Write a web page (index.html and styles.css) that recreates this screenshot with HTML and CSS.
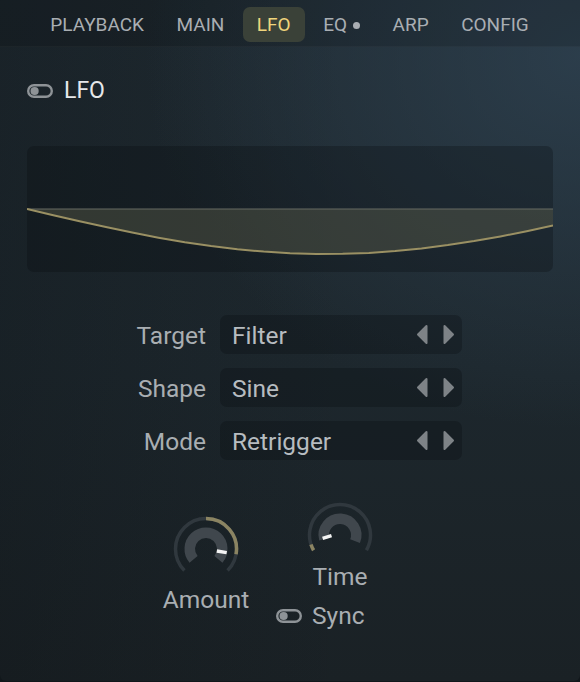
FILE: index.html
```html
<!DOCTYPE html>
<html>
<head>
<meta charset="utf-8">
<link rel="stylesheet" href="styles.css">
</head>
<body>
<div class="panel">
  <nav class="tabs">
    <div class="tab">PLAYBACK</div>
    <div class="tab">MAIN</div>
    <div class="tab active">LFO</div>
    <div class="tab">EQ<span class="dot"></span></div>
    <div class="tab">ARP</div>
    <div class="tab">CONFIG</div>
  </nav>

  <div class="content">
    <div class="header">
      <svg class="toggle" width="26" height="14" viewBox="0 0 26 14"><rect x="1.2" y="1.2" width="23.6" height="11.6" rx="5.8" fill="none" stroke="#8e9397" stroke-width="2.4"/><circle cx="7.6" cy="7" r="4.1" fill="#8e9397"/></svg>
      <span class="title">LFO</span>
    </div>

    <div class="wave">
      <svg width="526" height="126" viewBox="0 0 526 126">
        <path d="M0 63 L26.3 69.2 L52.6 75.3 L78.9 81.1 L105.2 86.6 L131.5 91.7 L157.8 96.2 L184.1 100.1 L210.4 103.2 L236.7 105.6 L263 107.2 L289.3 107.9 L315.6 107.8 L341.9 106.9 L368.2 105.1 L394.5 102.5 L420.8 99.1 L447.1 95.1 L473.4 90.4 L499.7 85.2 L526 79.6 L526 63 Z" fill="rgba(112,112,86,0.34)"/>
        <line x1="0" y1="63" x2="526" y2="63" stroke="#666b63" stroke-width="1.2"/>
        <polyline points="0,63 26.3,69.2 52.6,75.3 78.9,81.1 105.2,86.6 131.5,91.7 157.8,96.2 184.1,100.1 210.4,103.2 236.7,105.6 263,107.2 289.3,107.9 315.6,107.8 341.9,106.9 368.2,105.1 394.5,102.5 420.8,99.1 447.1,95.1 473.4,90.4 499.7,85.2 526,79.6" fill="none" stroke="#9a9063" stroke-width="2" stroke-linejoin="round"/>
      </svg>
    </div>

    <div class="form">
      <div class="row">
        <div class="label">Target</div>
        <div class="select"><span class="value">Filter</span>
          <span class="arrows">
            <svg width="12" height="21" viewBox="0 0 12 21"><path d="M10.5 2 L2 10.5 L10.5 19 Z" fill="#7e8387" stroke="#7e8387" stroke-width="2" stroke-linejoin="round"/></svg>
            <svg width="12" height="21" viewBox="0 0 12 21"><path d="M1.5 2 L10 10.5 L1.5 19 Z" fill="#7e8387" stroke="#7e8387" stroke-width="2" stroke-linejoin="round"/></svg>
          </span>
        </div>
      </div>
      <div class="row">
        <div class="label">Shape</div>
        <div class="select"><span class="value">Sine</span>
          <span class="arrows">
            <svg width="12" height="21" viewBox="0 0 12 21"><path d="M10.5 2 L2 10.5 L10.5 19 Z" fill="#7e8387" stroke="#7e8387" stroke-width="2" stroke-linejoin="round"/></svg>
            <svg width="12" height="21" viewBox="0 0 12 21"><path d="M1.5 2 L10 10.5 L1.5 19 Z" fill="#7e8387" stroke="#7e8387" stroke-width="2" stroke-linejoin="round"/></svg>
          </span>
        </div>
      </div>
      <div class="row">
        <div class="label">Mode</div>
        <div class="select"><span class="value">Retrigger</span>
          <span class="arrows">
            <svg width="12" height="21" viewBox="0 0 12 21"><path d="M10.5 2 L2 10.5 L10.5 19 Z" fill="#7e8387" stroke="#7e8387" stroke-width="2" stroke-linejoin="round"/></svg>
            <svg width="12" height="21" viewBox="0 0 12 21"><path d="M1.5 2 L10 10.5 L1.5 19 Z" fill="#7e8387" stroke="#7e8387" stroke-width="2" stroke-linejoin="round"/></svg>
          </span>
        </div>
      </div>
    </div>

    <div class="knobs">
      <div class="knob-group amount">
        <svg class="knob" width="66" height="60" viewBox="0 0 66 60">
          <path d="M11.43 54.57 A30.5 30.5 0 1 1 54.57 54.57" fill="none" stroke="#30383e" stroke-width="3.5"/>
          <path d="M33 2.5 A30.5 30.5 0 0 1 63.04 38.3" fill="none" stroke="#8b8462" stroke-width="3.5"/>
          <path d="M20.55 43.45 A16.25 16.25 0 1 1 45.45 43.45" fill="none" stroke="#40474d" stroke-width="10.5"/>
          <line x1="43.83" y1="34.91" x2="53.68" y2="36.65" stroke="#f4f4f4" stroke-width="3.5"/>
        </svg>
        <div class="knob-label amount-label">Amount</div>
      </div>
      <div class="knob-group time">
        <div class="time-knob">
          <svg class="knob" width="66" height="60" viewBox="0 0 66 60">
            <path d="M6.59 48.25 A30.5 30.5 0 1 1 59.41 48.25" fill="none" stroke="#30383e" stroke-width="3.5"/>
            <path d="M6.59 48.25 A30.5 30.5 0 0 1 3.99 42.42" fill="none" stroke="#8b8462" stroke-width="3.5"/>
            <path d="M17.3 37.21 A16.25 16.25 0 1 1 48.07 39.09" fill="none" stroke="#40474d" stroke-width="10.5"/>
            <line x1="24.5" y1="33.6" x2="15.6" y2="36.4" stroke="#f4f4f4" stroke-width="3.5"/>
          </svg>
          <div class="knob-label time-label">Time</div>
        </div>
        <div class="sync">
          <svg class="toggle" width="26" height="14" viewBox="0 0 26 14"><rect x="1.2" y="1.2" width="23.6" height="11.6" rx="5.8" fill="none" stroke="#8e9397" stroke-width="2.4"/><circle cx="7.6" cy="7" r="4.1" fill="#8e9397"/></svg>
          <span class="sync-label">Sync</span>
        </div>
      </div>
    </div>
  </div>
</div>
</body>
</html>
```
FILE: styles.css
```css
* { box-sizing: border-box; }
html, body {
  margin: 0;
  padding: 0;
  background: #11171b;
}
body {
  font-family: Roboto, "Liberation Sans", sans-serif;
  width: 580px;
  height: 682px;
  overflow: hidden;
}
.panel {
  width: 580px;
  height: 681px;
  border-radius: 0 0 6px 6px;
  overflow: hidden;
  background:
    radial-gradient(ellipse 75% 55% at 100% 8%, rgba(48, 68, 84, 0.75) 0%, rgba(48, 68, 84, 0) 100%),
    linear-gradient(90deg, rgba(10, 14, 17, 0.25) 0%, rgba(10, 14, 17, 0) 60%),
    linear-gradient(180deg, #1f2a31 0%, #1d272d 55%, #1a2125 100%);
}
.tabs {
  display: flex;
  justify-content: center;
  gap: 4.5px;
  height: 47px;
  padding-top: 7px;
  padding-right: 1px;
  background: rgba(0, 0, 0, 0.14);
  border-bottom: 1px solid rgba(255, 255, 255, 0.03);
}
.tab {
  display: flex;
  align-items: center;
  height: 35px;
  padding: 0 14px;
  border-radius: 7px;
  font-size: 19px;
  color: #a9aeb3;
}
.tab.active {
  background: #3a4138;
  color: #f0d57c;
}
.dot {
  width: 7px;
  height: 7px;
  border-radius: 50%;
  background: #a9aeb3;
  margin-left: 6px;
  margin-top: 1px;
}
.content {
  padding: 0 27px;
}
.header {
  display: flex;
  align-items: center;
  gap: 11px;
  height: 28px;
  margin-top: 30px;
}
.title {
  font-size: 23px;
  line-height: 28px;
  color: #e6e8ea;
}
.wave {
  margin-top: 41px;
  height: 126px;
  border-radius: 7px;
  background: rgba(8, 12, 15, 0.28);
  overflow: hidden;
}
.wave svg { display: block; }
.form {
  margin-top: 43px;
  display: flex;
  flex-direction: column;
  align-items: center;
  gap: 14px;
}
.row {
  display: flex;
  align-items: center;
  gap: 14px;
  height: 39px;
}
.label {
  width: 88px;
  text-align: right;
  font-size: 24.5px;
  color: #a9aeb2;
  padding-top: 2px;
}
.select {
  width: 242px;
  height: 39px;
  display: flex;
  align-items: center;
  justify-content: space-between;
  padding: 2px 7px 0 12px;
  border-radius: 7px;
  background: rgba(8, 12, 15, 0.28);
}
.value {
  font-size: 24.5px;
  color: #b7bcc0;
}
.arrows {
  display: flex;
  gap: 15px;
  margin-top: -2px;
}
.arrows svg { display: block; }
.knobs {
  display: flex;
  align-items: flex-start;
  margin-top: 42px;
  padding-left: 135px;
  gap: 26px;
}
.knob-group {
  display: flex;
  flex-direction: column;
}
.amount {
  width: 88px;
  align-items: center;
  margin-top: 14px;
}
.knob { display: block; }
.knob-label {
  font-size: 24.5px;
  line-height: 28px;
  color: #a9aeb2;
}
.amount-label { margin-top: 10px; }
.time {
  align-items: flex-start;
}
.time-knob {
  display: flex;
  flex-direction: column;
  align-items: center;
  width: 66px;
  margin-left: 31px;
}
.time-label { margin-top: 1px; }
.sync {
  display: flex;
  align-items: center;
  gap: 10px;
  margin-top: 11px;
}
.toggle { display: block; }
.sync-label {
  font-size: 24.5px;
  line-height: 28px;
  color: #a9aeb2;
}
```
